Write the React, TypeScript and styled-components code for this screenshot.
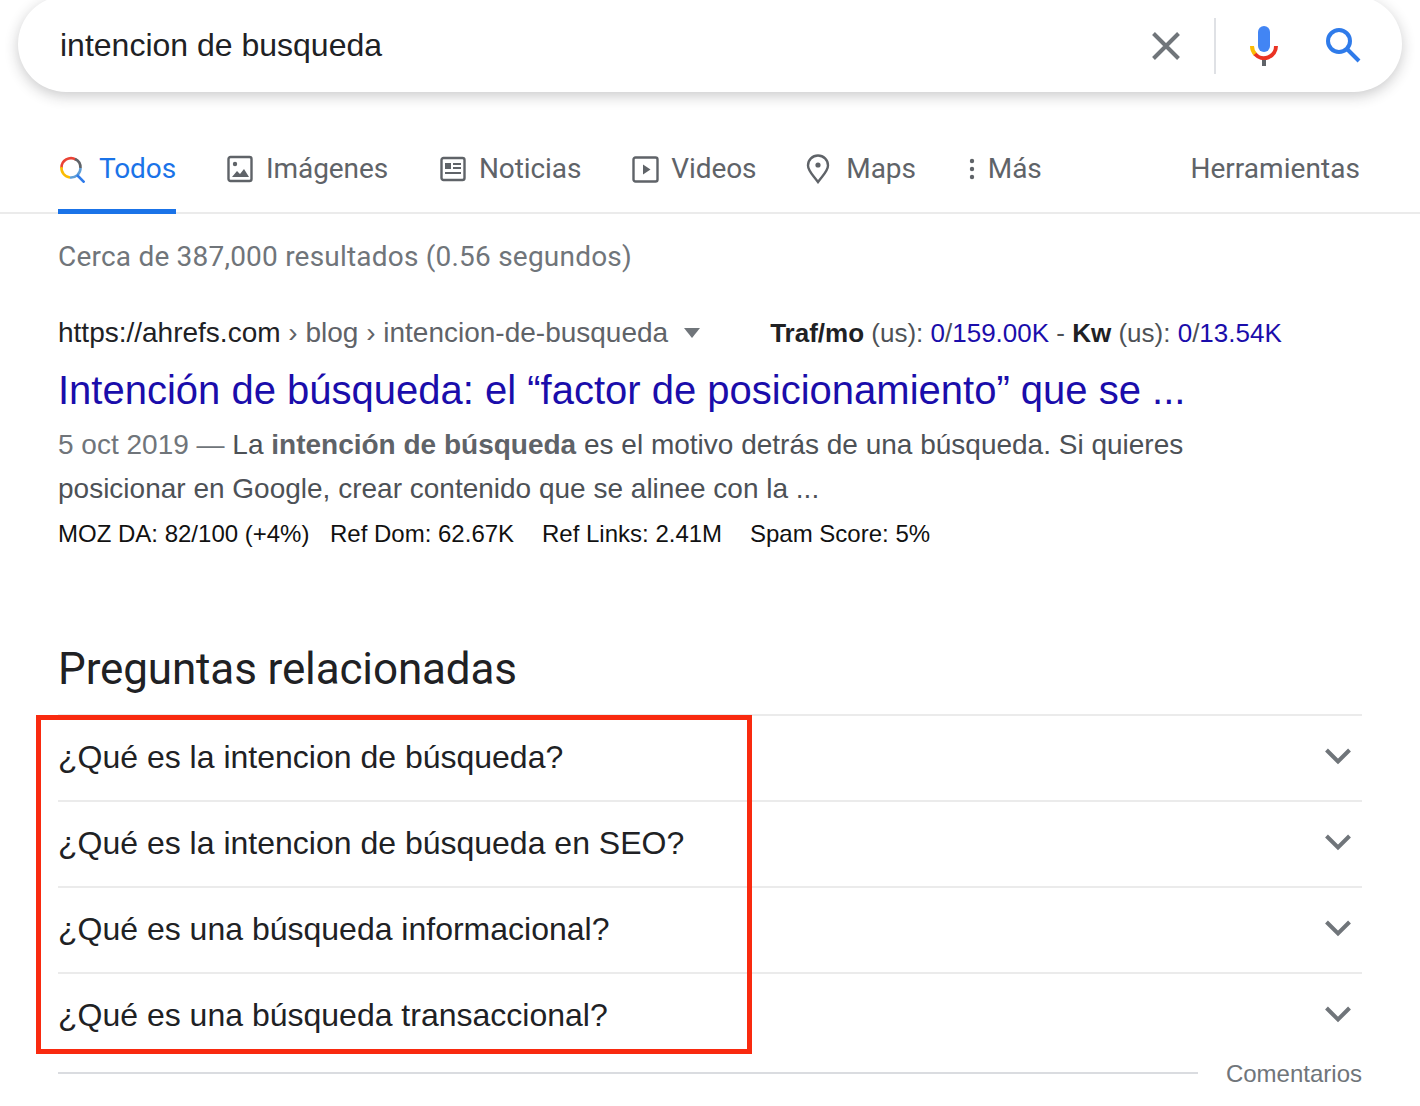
import React from 'react';
import styled, { createGlobalStyle } from 'styled-components';

const Global = createGlobalStyle`
  html, body { margin: 0; padding: 0; background: #fff; }
  body { font-family: "Liberation Sans", Arial, sans-serif; color: #202124; }
`;
const Page = styled.div`
  position: relative; width: 1420px; height: 1106px; overflow: hidden; background: #fff;
`;
const SearchBar = styled.div`
  margin: -4px 18px 0; height: 96px; border-radius: 48px;
  background: #fff; box-shadow: 0 4px 14px rgba(32,33,36,.24);
  display: flex; align-items: center; padding: 0 41px 0 42px; box-sizing: border-box;
`;
const SearchText = styled.div`
  flex: 1; font-size: 32px; line-height: 40px; color: #202124; margin-top: 2px;
`;
const Divider = styled.div`
  width: 2px; height: 56px; background: #dfe1e5; margin: 4px 33px 0 32px;
`;
const BarIcon = styled.svg`display: block; flex: none;`;
const ClearIcon = styled(BarIcon)`margin-top: 4px;`;
const MicIcon = styled(BarIcon)`margin-top: 4px;`;
const SearchBtn = styled(BarIcon)`margin-left: 46px; margin-top: 1px;`;

const Tabs = styled.nav`
  margin-top: 48px; height: 74px; box-sizing: border-box; padding: 0 60px 0 58px;
  border-bottom: 2px solid #ebebeb; display: flex; align-items: flex-start;
  font-family: Roboto, sans-serif; font-size: 28px; color: #5f6368; letter-spacing: -.1px;
`;
const Tab = styled.div<{ $active?: boolean; $gap: number; $mr: number }>`
  height: 74px; box-sizing: border-box; display: flex; align-items: center; gap: ${p => p.$gap}px;
  margin-right: ${p => p.$mr}px; padding-bottom: 16px; line-height: 40px;
  color: ${p => (p.$active ? '#1a73e8' : '#5f6368')};
  border-bottom: ${p => (p.$active ? '5px solid #1a73e8' : '0')};
  ${p => (p.$active ? 'padding-bottom: 11px;' : '')}
`;
const Tools = styled.div`margin-left: auto; height: 56px; display: flex; align-items: center; letter-spacing: .05px;`;

const Content = styled.main`padding: 0 58px;`;
const Stats = styled.div`
  margin-top: 23px; font-family: Roboto, sans-serif; font-size: 28px; line-height: 40px; color: #70757a; letter-spacing: .21px;
`;
const CiteRow = styled.div`
  margin-top: 36px; height: 40px; display: flex; align-items: center; font-size: 28px; line-height: 40px; color: #5f6368;
`;
const Host = styled.span`color: #202124;`;
const Caret = styled.span`
  width: 0; height: 0; border-left: 8px solid transparent; border-right: 8px solid transparent;
  border-top: 10px solid #70757a; margin: 0 70px 0 16px;
`;
const Metric = styled.span`font-size: 26px; color: #4d5156;`;
const Bold = styled.b`color: #202124;`;
const MetricLink = styled.span`color: #1a0dab;`;
const Title = styled.h3`
  margin: 11px 0 0; font-weight: 400; font-size: 40px; line-height: 52px; color: #1a0dab;
`;
const Snippet = styled.div`
  margin-top: 7px; font-size: 28px; line-height: 44px; color: #4d5156;
`;
const SnipDate = styled.span`color: #70757a;`;
const SnipBold = styled.b`color: #5f6368;`;
const Seo = styled.div`
  margin-top: 5px; font-size: 24px; line-height: 36px; color: #111; display: flex;
`;
const SeoItem = styled.span<{ $w: number }>`width: ${p => p.$w}px; flex: none;`;
const Heading = styled.h2`
  margin: 89px 0 0; font-family: Roboto, sans-serif; font-weight: 400; font-size: 44px; line-height: 56px; color: #202124;
  letter-spacing: -.13px;
`;
const List = styled.div`margin-top: 17px; border-top: 2px solid #ebebeb;`;
const Row = styled.div`
  height: 86px; box-sizing: border-box; border-bottom: 2px solid #ebebeb; display: flex; align-items: center;
  justify-content: space-between; font-size: 32px; color: #202124; padding: 0 10px 2px 0;
`;
const LastRow = styled(Row)`border-bottom-color: transparent;`;
const ChevronIcon = styled.svg`display: block; margin-bottom: 2px;`;
const Footer = styled.div`
  margin-top: -1px; display: flex; align-items: center; gap: 28px; font-size: 24px; line-height: 30px; color: #70757a;
`;
const FooterLine = styled.div`flex: 1; height: 2px; margin-bottom: 2px; background: #dadce0;`;
const RedBox = styled.div`
  position: absolute; left: 36px; top: 715px; width: 716px; height: 339px; box-sizing: border-box;
  border: 5px solid #f92a0f;
`;

const Chevron = () => (
  <ChevronIcon width="28" height="18" viewBox="0 0 28 18"><path d="M2.500 3 14 14.500 25.500 3" fill="none" stroke="#70757a" strokeWidth="4" /></ChevronIcon>
);
const questions = ['¿Qué es la intencion de búsqueda?', '¿Qué es la intencion de búsqueda en SEO?', '¿Qué es una búsqueda informacional?'];

export default function App() {
  return (
    <Page>
      <Global />
      <SearchBar>
        <SearchText>intencion de busqueda</SearchText>
        <ClearIcon width="32" height="32" viewBox="0 0 32 32"><path d="M3.500 3.500 28.500 28.500M28.500 3.500 3.500 28.500" stroke="#70757a" strokeWidth="4" fill="none" /></ClearIcon>
        <Divider />
        <MicIcon width="30" height="40" viewBox="0 0 30 40">
          <rect x="9" y="0" width="12" height="26" rx="6" fill="#4285f4" />
          <rect x="13" y="33" width="4" height="7" fill="#5f6368" />
          <path d="M3 20a12 12 0 0 0 3.500 8.500" fill="none" stroke="#fbbc04" strokeWidth="4" />
          <path d="M6 28a12 12 0 0 0 21-8" fill="none" stroke="#ea3323" strokeWidth="4" />
        </MicIcon>
        <SearchBtn width="36" height="36" viewBox="0 0 36 36">
          <circle cx="14" cy="14" r="11" fill="none" stroke="#2f7bea" strokeWidth="4" />
          <path d="M22 22 34 34" stroke="#2f7bea" strokeWidth="4" fill="none" />
        </SearchBtn>
      </SearchBar>
      <Tabs>
        <Tab $active $gap={14} $mr={51}>
          <svg width="27" height="28" viewBox="0 0 27 28">
            <path d="M3.500 13A9.500 9.500 0 0 1 18 4.600" fill="none" stroke="#ea4335" strokeWidth="2.600" />
            <path d="M3.500 12A9.500 9.500 0 0 0 12 22.500" fill="none" stroke="#fbbc04" strokeWidth="2.600" />
            <path d="M12 22.500A9.500 9.500 0 0 0 22.500 13" fill="none" stroke="#5f9ed6" strokeWidth="2.600" />
            <path d="M17 4A9.500 9.500 0 0 1 22.500 13" fill="none" stroke="#5f6368" strokeWidth="2.600" />
            <path d="M19 20 26.500 27.500" stroke="#2f7bea" strokeWidth="2.600" fill="none" />
          </svg>
          Todos
        </Tab>
        <Tab $gap={13} $mr={52}>
          <svg width="26" height="28" viewBox="0 0 26 28" fill="none">
            <rect x="1.500" y="2" width="23" height="24" rx="2" stroke="#5f6368" strokeWidth="2.400" />
            <circle cx="8" cy="9" r="2.200" fill="#5f6368" /><path d="M5 22l5-6 3 3 4-5 5 8z" fill="#5f6368" />
          </svg>
          Imágenes
        </Tab>
        <Tab $gap={13} $mr={51}>
          <svg width="26" height="26" viewBox="0 0 26 26" fill="none">
            <rect x="1.500" y="2" width="23" height="22" rx="2" stroke="#5f6368" strokeWidth="2.400" />
            <rect x="5" y="7" width="6" height="6" fill="#5f6368" /><path d="M13 8h8M13 12h8M5 17h16" stroke="#5f6368" strokeWidth="2" />
          </svg>
          Noticias
        </Tab>
        <Tab $gap={12} $mr={50}>
          <svg width="27" height="27" viewBox="0 0 27 27" fill="none">
            <rect x="1.500" y="1.500" width="24" height="24" rx="2" stroke="#5f6368" strokeWidth="2.400" /><path d="M11 8.500v10l7.500-5z" fill="#5f6368" />
          </svg>
          Videos
        </Tab>
        <Tab $gap={16} $mr={52}>
          <svg width="24" height="30" viewBox="0 0 24 30" fill="none">
            <path d="M12 28C7 21 2 17 2 11.500a10 10 0 0 1 20 0C22 17 17 21 12 28z" stroke="#5f6368" strokeWidth="2.400" /><circle cx="12" cy="11" r="2.600" fill="#5f6368" />
          </svg>
          Maps
        </Tab>
        <Tab $gap={12} $mr={0}>
          <svg width="8" height="24" viewBox="0 0 8 24" fill="#5f6368"><circle cx="4" cy="4" r="2.200" /><circle cx="4" cy="12" r="2.200" /><circle cx="4" cy="20" r="2.200" /></svg>
          Más
        </Tab>
        <Tools>Herramientas</Tools>
      </Tabs>
      <Content>
        <Stats>Cerca de 387,000 resultados (0.56 segundos)</Stats>
        <CiteRow>
          <Host>https://ahrefs.com</Host>&nbsp;› blog › intencion-de-busqueda
          <Caret />
          <Metric>
            <Bold>Traf/mo</Bold> (us): <MetricLink>0</MetricLink>/<MetricLink>159.00K</MetricLink> - <Bold>Kw</Bold> (us): <MetricLink>0</MetricLink>/<MetricLink>13.54K</MetricLink>
          </Metric>
        </CiteRow>
        <Title>Intención de búsqueda: el “factor de posicionamiento” que se ...</Title>
        <Snippet>
          <SnipDate>5 oct 2019 — </SnipDate>La <SnipBold>intención de búsqueda</SnipBold> es el motivo detrás de una búsqueda. Si quieres<br />
          posicionar en Google, crear contenido que se alinee con la ...
        </Snippet>
        <Seo>
          <SeoItem $w={272}>MOZ DA: 82/100 (+4%)</SeoItem>
          <SeoItem $w={212}>Ref Dom: 62.67K</SeoItem>
          <SeoItem $w={208}>Ref Links: 2.41M</SeoItem>
          <SeoItem $w={200}>Spam Score: 5%</SeoItem>
        </Seo>
        <Heading>Preguntas relacionadas</Heading>
        <List>
          {questions.map(q => <Row key={q}>{q}<Chevron /></Row>)}
          <LastRow>¿Qué es una búsqueda transaccional?<Chevron /></LastRow>
        </List>
        <Footer><FooterLine />Comentarios</Footer>
      </Content>
      <RedBox />
    </Page>
  );
}
